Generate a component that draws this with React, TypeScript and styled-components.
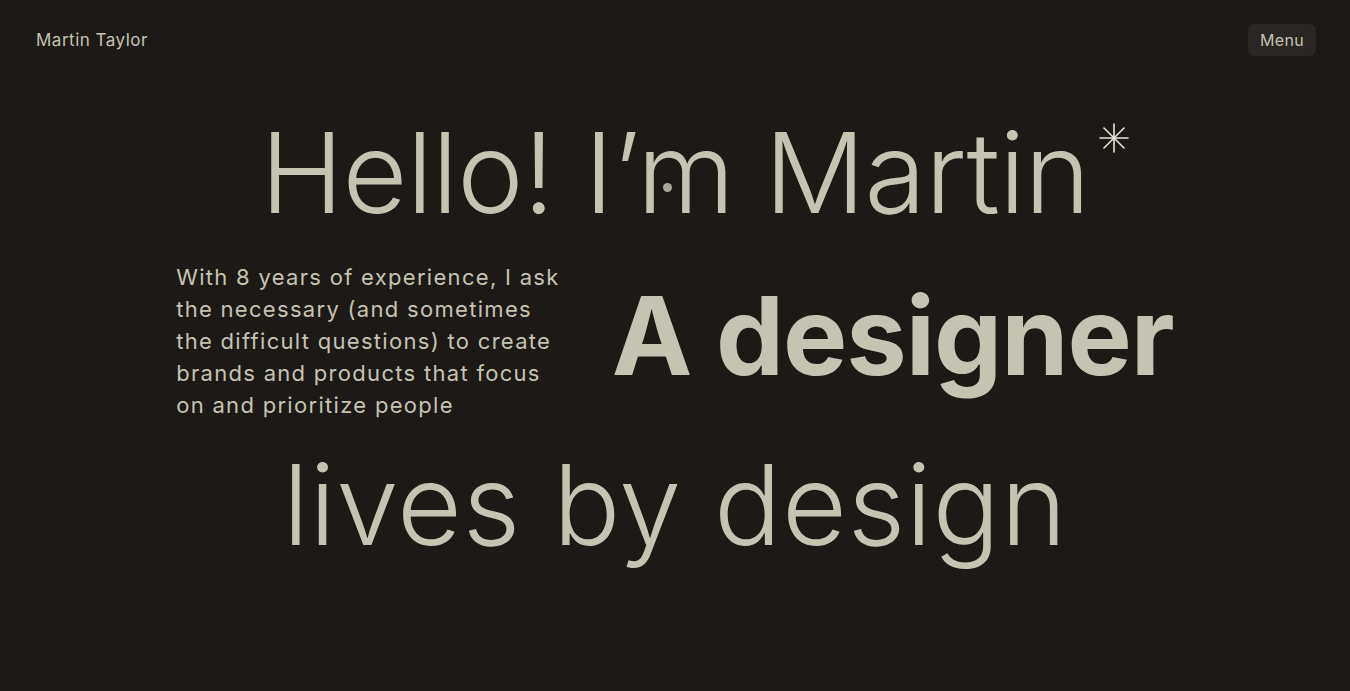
import React from "react";
import styled, { createGlobalStyle } from "styled-components";

const Global = createGlobalStyle`
  html, body { margin: 0; padding: 0; background: #1c1916; }
  body { font-family: Inter, "Noto Sans", sans-serif; color: #c5c3b2; }
  * { box-sizing: border-box; }
`;

const Page = styled.div`
  width: 1350px;
  height: 691px;
  background: #1c1916;
  display: flex;
  flex-direction: column;
  overflow: hidden;
`;

const Header = styled.header`
  display: flex;
  justify-content: space-between;
  align-items: center;
  padding: 24px 34px 0 36px;
`;

const Brand = styled.div`
  font-size: 17px;
  letter-spacing: 0.5px;
  color: #c5c3b2;
`;

const MenuButton = styled.button`
  font-family: inherit;
  font-size: 16px;
  letter-spacing: 0.3px;
  color: #c5c3b2;
  background: #2a2623;
  border: none;
  border-radius: 6px;
  height: 32px;
  padding: 0 12px;
`;

const Hero = styled.main`
  display: flex;
  flex-direction: column;
  align-items: center;
`;

const BigLine = styled.h1<{ $weight: number; $size: number; $spacing: number; $top: number }>`
  margin: ${(p) => p.$top}px 0 0;
  font-size: ${(p) => p.$size}px;
  font-weight: ${(p) => p.$weight};
  line-height: 1;
  letter-spacing: ${(p) => p.$spacing}px;
  color: #c5c3b2;
  position: relative;
  white-space: nowrap;
`;

const Star = styled.svg`
  position: absolute;
  right: -39px;
  top: 7px;
  width: 30px;
  height: 30px;
`;

const DotWrap = styled.span`
  position: relative;
`;

const Dot = styled.span`
  position: absolute;
  left: 31%;
  top: 58%;
  width: 9px;
  height: 9px;
  margin-left: -4px;
  border-radius: 50%;
  background: #a9a797;
`;

const MiddleRow = styled.div`
  display: flex;
  align-items: flex-start;
  gap: 52px;
  margin-top: 33px;
`;

const Intro = styled.p`
  margin: 0;
  font-size: 22px;
  line-height: 32px;
  letter-spacing: 1.3px;
  white-space: nowrap;
  color: #c5c3b2;
`;

export default function App() {
  return (
    <Page>
      <Global />
      <Header>
        <Brand>Martin Taylor</Brand>
        <MenuButton>Menu</MenuButton>
      </Header>
      <Hero>
        <BigLine $weight={300} $size={112} $spacing={-0.8} $top={60}>
          Hello! I’
          <DotWrap>
            m<Dot />
          </DotWrap>{" "}
          Martin
          <Star viewBox="0 0 30 30" fill="none" stroke="#e8e6d8" strokeWidth="1.6" strokeLinecap="round">
            <line x1="15" y1="1" x2="15" y2="29" />
            <line x1="1" y1="15" x2="29" y2="15" />
            <line x1="5" y1="5" x2="25" y2="25" />
            <line x1="25" y1="5" x2="5" y2="25" />
          </Star>
        </BigLine>
        <MiddleRow>
          <Intro>
            With 8 years of experience, I ask
            <br />
            the necessary (and sometimes
            <br />
            the difficult questions) to create
            <br />
            brands and products that focus
            <br />
            on and prioritize people
          </Intro>
          <BigLine $weight={700} $size={108} $spacing={-1} $top={21}>
            A designer
          </BigLine>
        </MiddleRow>
        <BigLine $weight={300} $size={112} $spacing={0.6} $top={27}>
          lives by design
        </BigLine>
      </Hero>
    </Page>
  );
}
